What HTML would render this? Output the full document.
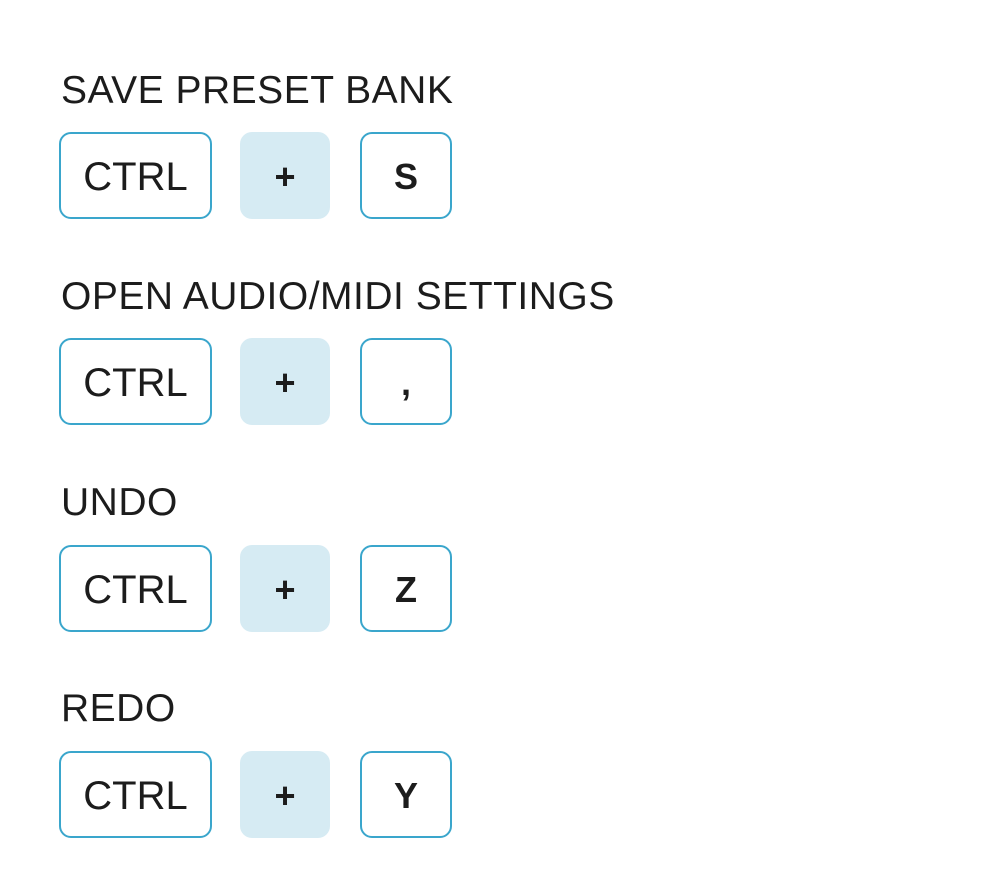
<!DOCTYPE html>
<html><head><style>
body{margin:0;width:1007px;height:885px;background:#fff;font-family:"Liberation Sans",sans-serif;color:#1c1c1c;position:relative;overflow:hidden}
.t{position:absolute;left:61px;font-size:39px;line-height:1;white-space:nowrap;letter-spacing:0.5px}
.k{position:absolute;box-sizing:border-box;height:87px;padding-top:3px;border:2.5px solid #3aa6cc;border-radius:12px;display:flex;align-items:center;justify-content:center;font-size:40px}
.c{left:59px;width:153px}
.p{left:240px;width:90px;background:#d6ebf3;border-color:#d6ebf3;font-weight:bold;font-size:36px}
.s{left:360px;width:92px;font-weight:bold;font-size:36px}
</style></head><body>
<div class="t" style="top:71px">SAVE PRESET BANK</div>
<div class="k c" style="top:132px">CTRL</div><div class="k p" style="top:132px">+</div><div class="k s" style="top:132px">S</div>
<div class="t" style="top:277px">OPEN AUDIO/MIDI SETTINGS</div>
<div class="k c" style="top:338px">CTRL</div><div class="k p" style="top:338px">+</div><div class="k s" style="top:338px">,</div>
<div class="t" style="top:483px">UNDO</div>
<div class="k c" style="top:545px">CTRL</div><div class="k p" style="top:545px">+</div><div class="k s" style="top:545px">Z</div>
<div class="t" style="top:689px">REDO</div>
<div class="k c" style="top:751px">CTRL</div><div class="k p" style="top:751px">+</div><div class="k s" style="top:751px">Y</div>
</body></html>
